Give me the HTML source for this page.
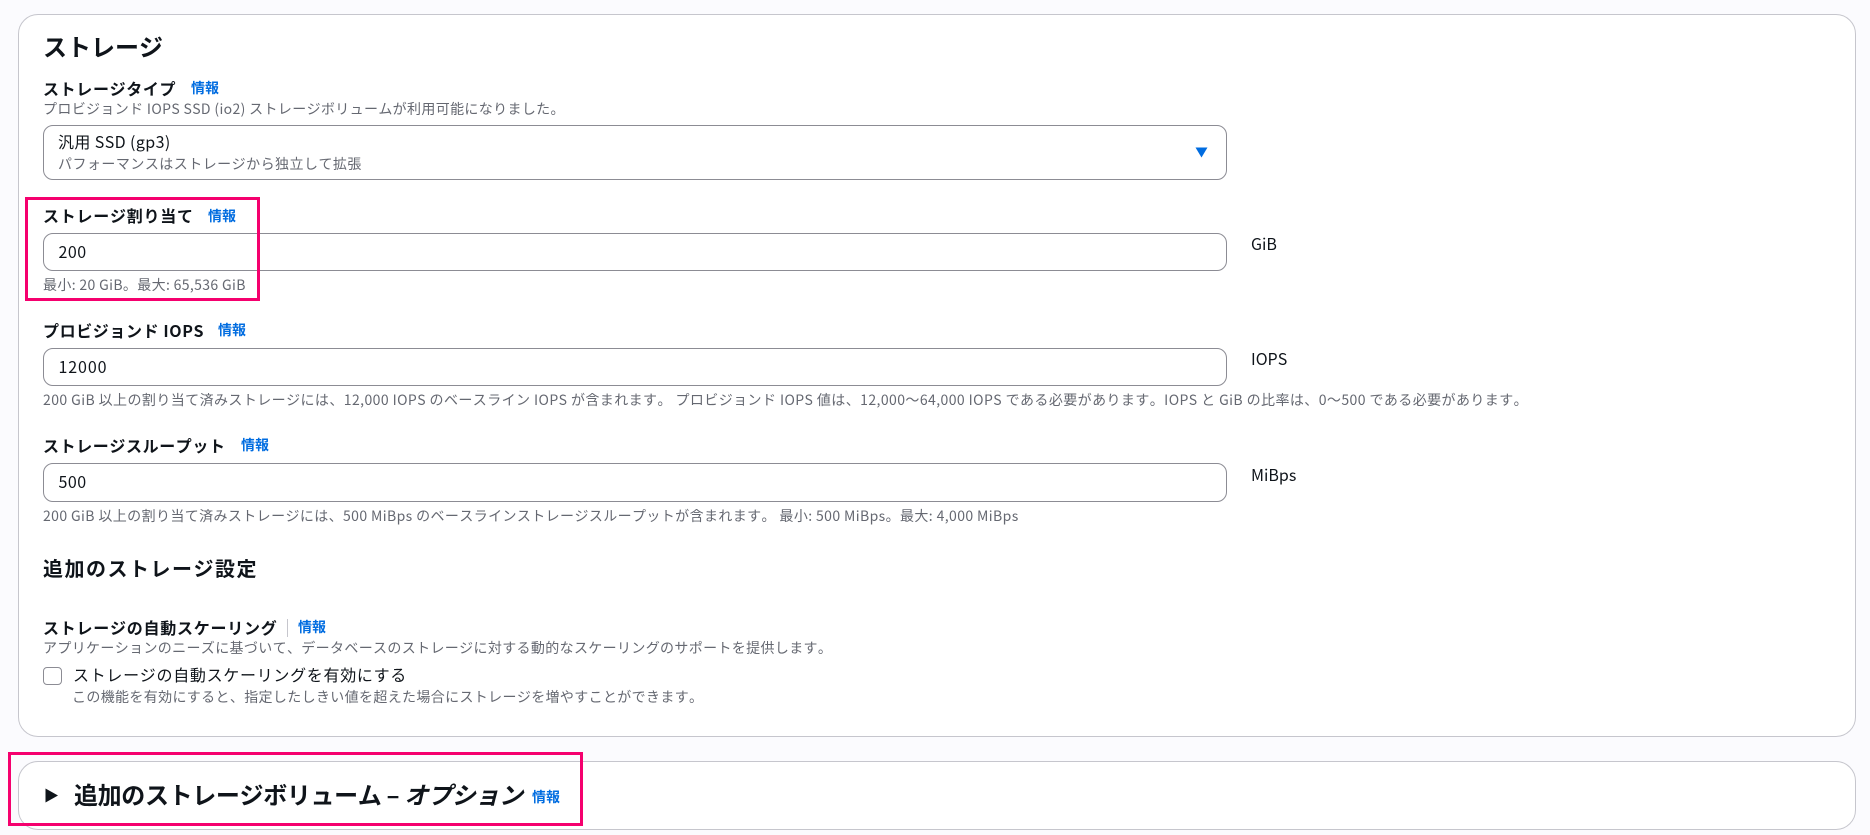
<!DOCTYPE html>
<html lang="ja">
<head>
<meta charset="utf-8">
<style>
html,body{margin:0;padding:0;width:1870px;height:835px;overflow:hidden;background:#fbfbfe;}
body{position:relative;font-family:"Noto Sans CJK JP","Liberation Sans",sans-serif;color:#0f141a;font-kerning:none;}
.b{position:absolute;box-sizing:border-box;}
.card{background:#fff;border:1px solid #c6c6cd;border-radius:20px;}
.inp{background:#fff;border:1px solid #8c8c94;border-radius:10px;left:43px;width:1184px;}
.pink{border:3px solid #f5006e;}
.t{position:absolute;white-space:nowrap;line-height:20px;height:20px;}
.h1{font-size:24px;font-weight:700;}
.l{font-size:16px;font-weight:700;letter-spacing:.6px;}
.d{font-size:14px;color:#656871;letter-spacing:.35px;}
.v{font-size:16px;margin-top:-1px;}
.i{font-size:14px;font-weight:700;color:#006ce0;}
</style>
</head>
<body>
<div class="b card" style="left:18px;top:14px;width:1838px;height:723px;"></div>
<div class="b card" style="left:18px;top:761px;width:1838px;height:69px;"></div>

<div class="t h1" style="left:43px;top:36px;">ストレージ</div>

<div class="t l" style="left:43px;top:78px;letter-spacing:.65px;">ストレージタイプ</div>
<div class="t i" style="left:191px;top:78px;">情報</div>
<div class="t d" style="left:43px;top:99px;">プロビジョンド IOPS SSD (io2) ストレージボリュームが利用可能になりました。</div>

<div class="b inp" style="top:125px;height:55px;"></div>
<div class="t v" style="left:58px;top:132px;letter-spacing:.4px;">汎用 SSD (gp3)</div>
<div class="t d" style="left:58px;top:154px;letter-spacing:.47px;">パフォーマンスはストレージから独立して拡張</div>
<svg class="b" style="left:1195px;top:147px;" width="13" height="11" viewBox="0 0 13 11"><path d="M0.5 0.5H12.5L6.5 10.5Z" fill="#006ce0"/></svg>

<div class="t l" style="left:43px;top:205px;letter-spacing:.75px;">ストレージ割り当て</div>
<div class="t i" style="left:208px;top:206px;">情報</div>
<div class="b inp" style="top:233px;height:38px;"></div>
<div class="t v" style="left:58.5px;top:242px;letter-spacing:.5px;">200</div>
<div class="t d" style="left:43px;top:275px;">最小: 20 GiB。最大: 65,536 GiB</div>
<div class="t v" style="left:1251px;top:234px;">GiB</div>

<div class="t l" style="left:43px;top:320px;">プロビジョンド IOPS</div>
<div class="t i" style="left:218px;top:320px;">情報</div>
<div class="b inp" style="top:348px;height:38px;"></div>
<div class="t v" style="left:58.5px;top:357px;letter-spacing:.9px;">12000</div>
<div class="t d" style="left:43px;top:390px;letter-spacing:.42px;">200 GiB 以上の割り当て済みストレージには、12,000 IOPS のベースライン IOPS が含まれます。 プロビジョンド IOPS 値は、12,000～64,000 IOPS である必要があります。IOPS と GiB の比率は、0～500 である必要があります。</div>
<div class="t v" style="left:1251px;top:349px;">IOPS</div>

<div class="t l" style="left:43px;top:435px;">ストレージスループット</div>
<div class="t i" style="left:241px;top:435px;">情報</div>
<div class="b inp" style="top:463px;height:39px;"></div>
<div class="t v" style="left:58.5px;top:472px;letter-spacing:.5px;">500</div>
<div class="t d" style="left:43px;top:506px;letter-spacing:.39px;">200 GiB 以上の割り当て済みストレージには、500 MiBps のベースラインストレージスループットが含まれます。 最小: 500 MiBps。最大: 4,000 MiBps</div>
<div class="t v" style="left:1251px;top:465px;">MiBps</div>

<div class="t" style="left:43px;top:558px;font-size:20px;font-weight:700;letter-spacing:1.5px;">追加のストレージ設定</div>

<div class="t l" style="left:43px;top:617px;letter-spacing:.75px;">ストレージの自動スケーリング</div>
<div class="b" style="left:287px;top:619px;width:1px;height:18px;background:#c6c6cd;"></div>
<div class="t i" style="left:298px;top:617px;">情報</div>
<div class="t d" style="left:43px;top:638px;">アプリケーションのニーズに基づいて、データベースのストレージに対する動的なスケーリングのサポートを提供します。</div>
<div class="b" style="left:43px;top:667px;width:19px;height:18px;background:#fff;border:1.5px solid #8c8c94;border-radius:4px;"></div>
<div class="t v" style="left:73px;top:665px;letter-spacing:.7px;">ストレージの自動スケーリングを有効にする</div>
<div class="t d" style="left:72px;top:687px;">この機能を有効にすると、指定したしきい値を超えた場合にストレージを増やすことができます。</div>

<svg class="b" style="left:45px;top:788px;" width="14" height="15" viewBox="0 0 14 15"><path d="M0.5 0.5L13 7.5L0.5 14.5Z" fill="#0f141a"/></svg>
<div class="t h1" style="left:74px;top:784px;letter-spacing:-.35px;">追加のストレージボリューム – <i>オプション</i></div>
<div class="t i" style="left:532px;top:787px;">情報</div>

<div class="b pink" style="left:25px;top:197px;width:235px;height:104px;"></div>
<div class="b pink" style="left:8px;top:752px;width:575px;height:74px;"></div>
</body>
</html>
